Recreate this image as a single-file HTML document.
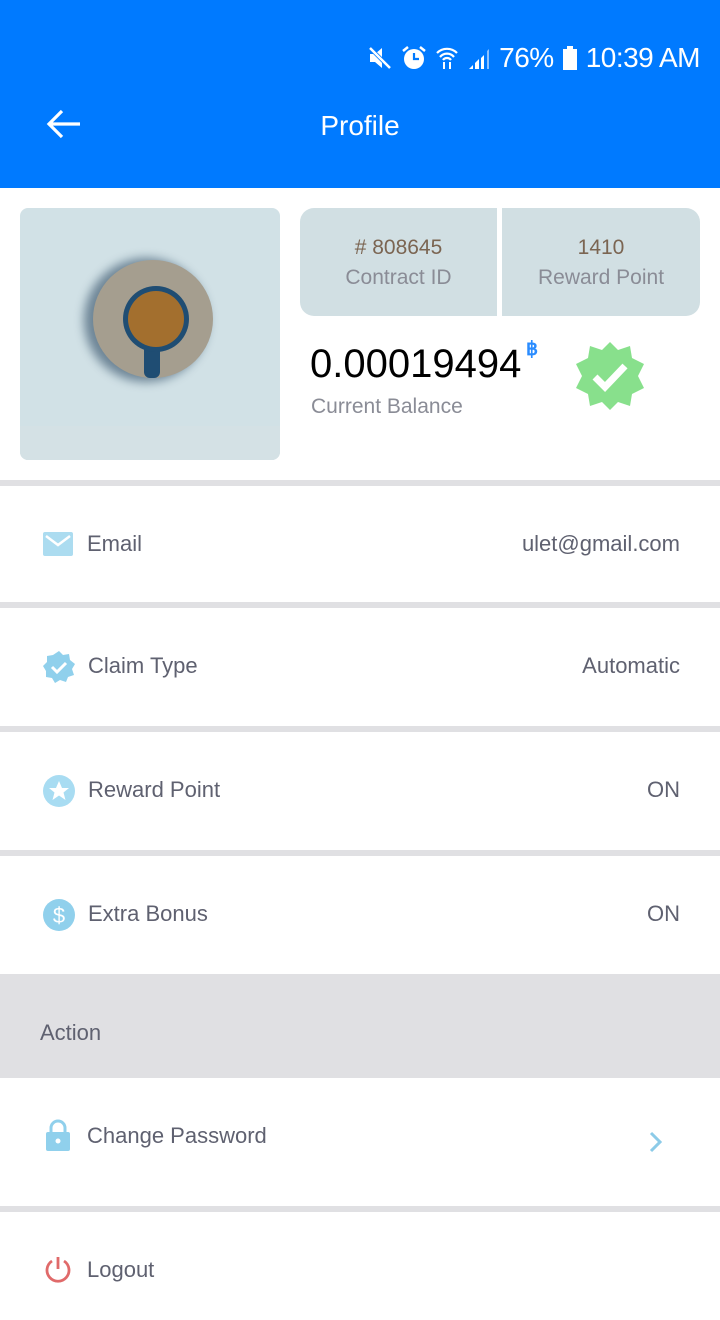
<!DOCTYPE html>
<html><head><meta charset="utf-8"><style>
*{margin:0;padding:0;box-sizing:border-box}
body{width:720px;height:1320px;background:#fff;font-family:"Liberation Sans",sans-serif;position:relative;overflow:hidden}
.hdr{position:absolute;left:0;top:0;width:720px;height:188px;background:#007aff;color:#fff}
.abs{position:absolute}
.div{position:absolute;left:0;width:720px;height:6px;background:#e0e0e3}
.lbl{position:absolute;left:87px;font-size:22px;color:#5f6170}
.val{position:absolute;right:40px;font-size:22px;color:#5f6170}
</style></head><body>
<div class="hdr">
  <div class="abs" style="right:20px;top:42px;font-size:28px;display:flex;align-items:center;gap:8px;letter-spacing:-0.5px">
    <svg width="26" height="26" viewBox="0 0 26 26"><path d="M3 9h5l7-6v20l-7-6H3z" fill="#fff"/><path d="M3 3l20 20" stroke="#007aff" stroke-width="4"/><path d="M3 3l20 20" stroke="#fff" stroke-width="2.5"/></svg>
    <svg width="26" height="26" viewBox="0 0 26 26"><circle cx="13" cy="14" r="10" fill="#fff"/><path d="M13 8v6h5" stroke="#007aff" stroke-width="2.2" fill="none"/><path d="M2 6l5-4M24 6l-5-4" stroke="#fff" stroke-width="2.5"/></svg>
    <svg width="24" height="26" viewBox="0 0 24 26"><path d="M2 8a14 14 0 0 1 20 0M5 12a9 9 0 0 1 14 0M8 15a5 5 0 0 1 8 0" stroke="#fff" stroke-width="2.2" fill="none"/><path d="M9 17v7M15 17v7" stroke="#fff" stroke-width="2"/></svg>
    <svg width="24" height="24" viewBox="0 0 24 24"><path d="M2 23h4v-4zM8 23h4v-10l-4 4zM14 23h3V9l-3 3z" fill="#fff"/><path d="M20 23h2V3l-2 2z" fill="#8cc0ff"/></svg>
    <span>76%</span>
    <svg width="16" height="26" viewBox="0 0 16 26"><rect x="5" y="1" width="6" height="3" fill="#fff"/><rect x="1" y="4" width="14" height="21" fill="#fff"/></svg>
    <span>10:39 AM</span>
  </div>
  <svg class="abs" style="left:46px;top:108px" width="36" height="32" viewBox="0 0 36 32"><path d="M34 16H4M16 3L3 16l13 13" stroke="#fff" stroke-width="3.2" fill="none"/></svg>
  <div class="abs" style="left:0;width:720px;top:110px;text-align:center;font-size:28px">Profile</div>
</div>
<div class="abs" style="left:20px;top:208px;width:260px;height:252px;background:#d1e1e6;border-radius:8px;overflow:hidden">
  <div class="abs" style="left:0;top:218px;width:260px;height:34px;background:#d4e1e5"></div>
  <div class="abs" style="left:64px;top:50px;width:124px;height:124px;border-radius:50%;background:#1c3a55;filter:blur(5px);opacity:.55"></div>
  <div class="abs" style="left:73px;top:52px;width:120px;height:118px;border-radius:50%;background:#a59e8f"></div>
  <div class="abs" style="left:124px;top:120px;width:16px;height:50px;border-radius:6px;background:#1f4d73"></div>
  <div class="abs" style="left:103px;top:78px;width:66px;height:66px;border-radius:50%;background:#1f4d73"></div>
  <div class="abs" style="left:108px;top:83px;width:56px;height:56px;border-radius:50%;background:#a36f2e"></div>
</div>
<div class="abs" style="left:300px;top:208px;width:197px;height:108px;background:#d1dfe3;border-radius:14px 0 0 14px;text-align:center">
  <div style="margin-top:28px;font-size:21px;color:#7b6552">#&nbsp;808645</div>
  <div style="margin-top:6px;font-size:21px;color:#8a8c96">Contract ID</div>
</div>
<div class="abs" style="left:502px;top:208px;width:198px;height:108px;background:#d1dfe3;border-radius:0 14px 14px 0;text-align:center">
  <div style="margin-top:28px;font-size:21px;color:#7b6552">1410</div>
  <div style="margin-top:6px;font-size:21px;color:#8a8c96">Reward Point</div>
</div>
<div class="abs" style="left:310px;top:342px;font-size:40px;color:#000">0.00019494</div>
<div class="abs" style="left:526px;top:338px;font-size:19px;color:#2a8cff;font-weight:bold">฿</div>
<div class="abs" style="left:311px;top:395px;font-size:21px;color:#8a8c96">Current Balance</div>
<svg class="abs" style="left:572px;top:340px" width="76" height="72" viewBox="0 0 76 72"><polygon points="38,2 46,10 58,6 60,18 72,24 66,36 72,48 60,54 58,66 46,62 38,70 30,62 18,66 16,54 4,48 10,36 4,24 16,18 18,6 30,10" fill="#88e08c"/><path d="M23 37l10 10 20-21" stroke="#fff" stroke-width="7" fill="none"/></svg>

<div class="div" style="top:480px"></div>
<svg class="abs" style="left:43px;top:532px" width="30" height="24" viewBox="0 0 30 24"><rect width="30" height="24" rx="2" fill="#acdcf0"/><path d="M3 4l12 9 12-9" stroke="#fff" stroke-width="2.5" fill="none"/></svg>
<div class="lbl" style="top:531px">Email</div><div class="val" style="top:531px">ulet@gmail.com</div>
<div class="div" style="top:602px"></div>
<svg class="abs" style="left:42px;top:650px" width="34" height="34" viewBox="0 0 34 34"><polygon points="17,1 21,5 27,4 28,10 33,14 30,19 32,25 26,27 24,32 18,30 13,33 10,28 4,27 4,21 1,16 5,12 5,6 11,5" fill="#90d0ec"/><path d="M10 17l5 5 9-9" stroke="#fff" stroke-width="3" fill="none"/></svg>
<div class="lbl" style="top:653px;left:88px">Claim Type</div><div class="val" style="top:653px">Automatic</div>
<div class="div" style="top:726px"></div>
<svg class="abs" style="left:43px;top:775px" width="32" height="32" viewBox="0 0 32 32"><circle cx="16" cy="16" r="16" fill="#a8dcf2"/><polygon points="16,6 19,13 26,13 20.5,17.5 22.5,25 16,20.5 9.5,25 11.5,17.5 6,13 13,13" fill="#fff"/></svg>
<div class="lbl" style="top:777px;left:88px">Reward Point</div><div class="val" style="top:777px">ON</div>
<div class="div" style="top:850px"></div>
<svg class="abs" style="left:43px;top:899px" width="32" height="32" viewBox="0 0 32 32"><circle cx="16" cy="16" r="16" fill="#90d0ec"/><text x="16" y="24" text-anchor="middle" font-family="Liberation Sans" font-size="22" fill="#fff">$</text></svg>
<div class="lbl" style="top:901px;left:88px">Extra Bonus</div><div class="val" style="top:901px">ON</div>
<div class="abs" style="left:0;top:974px;width:720px;height:104px;background:#e0e0e3"></div>
<div class="abs" style="left:40px;top:1020px;font-size:22px;color:#5f6170">Action</div>
<svg class="abs" style="left:45px;top:1119px" width="26" height="32" viewBox="0 0 26 32"><path d="M6 13V9a7 7 0 0 1 14 0v4" stroke="#90d0ec" stroke-width="3" fill="none"/><rect x="1" y="13" width="24" height="19" rx="2" fill="#90d0ec"/><circle cx="13" cy="22" r="2.5" fill="#fff"/></svg>
<div class="lbl" style="top:1123px">Change Password</div>
<svg class="abs" style="left:648px;top:1130px" width="16" height="24" viewBox="0 0 16 24"><path d="M3 3l9 9-9 9" stroke="#8ccbe8" stroke-width="3" fill="none"/></svg>
<div class="div" style="top:1206px"></div>
<svg class="abs" style="left:43px;top:1255px" width="30" height="30" viewBox="0 0 30 30"><path d="M9 6a11 11 0 1 0 12 0" stroke="#e06a6a" stroke-width="2.8" fill="none"/><path d="M15 2v12" stroke="#e06a6a" stroke-width="2.8"/></svg>
<div class="lbl" style="top:1257px">Logout</div>
</body></html>
